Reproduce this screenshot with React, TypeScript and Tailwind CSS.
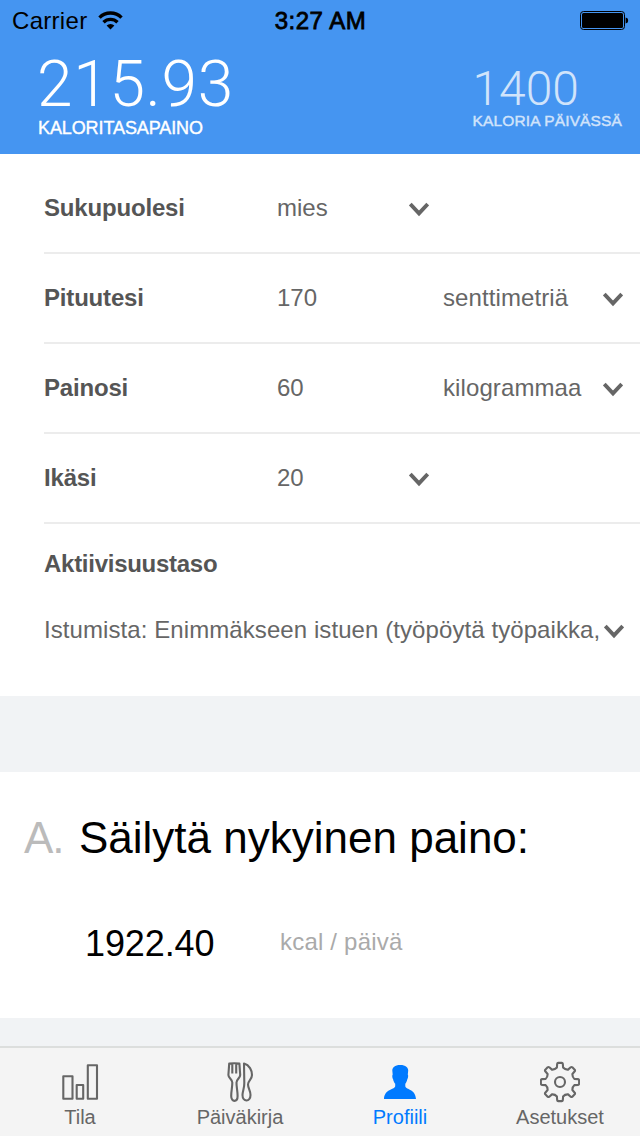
import React from "react";

const Chevron = () => (
  <svg width="20" height="16" viewBox="0 0 20 16" className="relative top-[2px] block" fill="none" stroke="#666" strokeWidth="3.8">
    <path d="M1.3 2 10 11.4 18.7 2" />
  </svg>
);

const rad = (deg: number) => (deg * Math.PI) / 180;
const point = (r: number, deg: number) =>
  `${(20 + r * Math.sin(rad(deg))).toFixed(2)} ${(20 - r * Math.cos(rad(deg))).toFixed(2)}`;
const gearPath =
  Array.from({ length: 8 }, (_, i) => {
    const a = i * 45;
    return [
      `${i === 0 ? "M" : "L"}${point(14.8, a - 12)}`,
      `L${point(18.2, a - 9)}`,
      `Q${point(19.2, a - 8)} ${point(19.2, a - 5)}`,
      `L${point(19.2, a + 5)}`,
      `Q${point(19.2, a + 8)} ${point(18.2, a + 9)}`,
      `L${point(14.8, a + 12)}`,
      `Q${point(13.2, a + 22.5)} ${point(14.8, a + 33)}`,
    ].join(" ");
  }).join(" ") + "Z";

type RowProps = { label: string; value: string; unit?: string };

const Row = ({ label, value, unit }: RowProps) => (
  <div className="flex h-[90px] items-center border-b-2 border-[#ececec] text-[24px]">
    <div className="w-[233px] font-bold tracking-[-0.18px] text-[#555]">{label}</div>
    {unit ? (
      <>
        <div className="w-[166px]">{value}</div>
        <div className="w-[160px] tracking-[0.1px]">{unit}</div>
        <Chevron />
      </>
    ) : (
      <>
        <div className="w-[132px]">{value}</div>
        <Chevron />
      </>
    )}
  </div>
);

const Tab = ({ label, active, children }: { label: string; active?: boolean; children: React.ReactNode }) => (
  <div className={active ? "flex w-40 flex-col items-center text-[#007aff]" : "flex w-40 flex-col items-center text-[#666]"}>
    <svg width="40" height="44" viewBox="0 -2 40 44" className="mt-3 block" fill="none" stroke="currentColor" strokeWidth="2.1">
      {children}
    </svg>
    <span className="mt-[1px] text-[20px] leading-6">{label}</span>
  </div>
);

export default function App() {
  return (
    <div className="flex h-[1136px] w-[640px] flex-col overflow-hidden bg-[#f1f3f5] font-['Liberation_Sans',Arial,sans-serif] text-[#666]">
      <header className="h-[154px] shrink-0 bg-[#4595f1]">
        <div className="grid h-[41px] grid-cols-3 items-center pl-3 pr-[11px] text-[24px] text-black">
          <div className="flex items-center gap-[11px]">
            <span className="pt-px tracking-[0.3px]">Carrier</span>
            <svg width="25" height="19" viewBox="0 0 25 19" fill="none" stroke="#000" strokeWidth="3.4">
              <path d="M1.5 6.6a15.5 15.5 0 0 1 22 0M5.5 11.2a10 10 0 0 1 14 0" />
              <path d="M8.6 14.5a5.5 5.5 0 0 1 7.8 0L12.5 18.5z" fill="#000" stroke="none" />
            </svg>
          </div>
          <div className="pt-px text-center tracking-[0.5px] [-webkit-text-stroke:0.8px_#000]">3:27 AM</div>
          <svg width="50" height="20" viewBox="0 0 50 20" className="ml-auto">
            <rect x="1.5" y="0.5" width="44" height="18" rx="3" fill="none" stroke="#000" strokeWidth="1" />
            <rect x="3" y="2" width="41" height="15" rx="1.5" />
            <path d="M46.6 6.500c2 .4 2.500 1.500 2.500 3s-.5 2.600-2.500 3z" />
          </svg>
        </div>
        <div className="flex justify-between pl-[38px] pr-[18px] text-white">
          <div className="pt-3">
            <div className="ml-[-1px] font-['Roboto'] text-[64px] font-light leading-[63px] tracking-[0.7px]">215.93</div>
            <div className="text-[18px] leading-6 tracking-[-0.1px] [-webkit-text-stroke:0.4px_#fff]">KALORITASAPAINO</div>
          </div>
          <div className="pt-[26px] opacity-75">
            <div className="font-['Roboto'] text-[48px] font-light leading-[43px] tracking-[-0.1px]">1400</div>
            <div className="mt-[-1px] text-[15.5px] leading-6 tracking-[0.13px] [-webkit-text-stroke:0.4px_#fff]">KALORIA PÄIVÄSSÄ</div>
          </div>
        </div>
      </header>

      <section className="h-[542px] shrink-0 bg-white pl-11 pt-[10px]">
        <Row label="Sukupuolesi" value="mies" />
        <Row label="Pituutesi" value="170" unit="senttimetriä" />
        <Row label="Painosi" value="60" unit="kilogrammaa" />
        <Row label="Ikäsi" value="20" />
        <div className="mt-6 text-[24px] font-bold leading-8 tracking-[-0.27px] text-[#555]">Aktiivisuustaso</div>
        <div className="mt-[34px] flex items-center text-[24px] leading-8">
          <span className="w-[560px] whitespace-nowrap tracking-[0.08px]">Istumista: Enimmäkseen istuen (työpöytä työpaikka,</span>
          <Chevron />
        </div>
      </section>

      <section className="mt-[76px] h-[246px] shrink-0 bg-white">
        <div className="flex pl-6 pt-[38px] text-[44px] leading-[56px] text-black">
          <span className="w-[55px] tracking-[-1px] text-[#bbb]">A.</span>
          <span>Säilytä nykyinen paino:</span>
        </div>
        <div className="mt-[54px] flex items-start pl-[85px]">
          <span className="w-[195px] text-[36px] leading-[48px] tracking-[-0.1px] text-black">1922.40</span>
          <span className="text-[24px] leading-[44px] tracking-[0.2px] text-[#aaa]">kcal / päivä</span>
        </div>
      </section>

      <nav className="mt-[28px] flex h-[90px] shrink-0 border-t-2 border-[#dcdedd] bg-[#f4f4f4]">
        <Tab label="Tila">
          <path strokeLinejoin="round" d="M3.3 14.3h9.2v22.4H3.3zM16.7 23h6.5v13.7h-6.5zM27.8 3.3H37v33.4h-9.2z" />
        </Tab>
        <Tab label="Päiväkirja">
          <path
            strokeLinejoin="round"
            d="M9.200 1.600Q14.300 .9 19.400 1.600L20.200 13C20.200 16 16.700 17 16.500 20.500C16.400 25 17.600 29 17.600 34C17.600 40.500 11.200 40.500 11.200 34C11.200 29 12.400 25 12.300 20.500C12.100 17 8.400 16 8.400 13ZM12.300 1.500V11.500M16.200 1.500V11.500"
          />
          <path
            strokeLinejoin="round"
            d="M24 1.500C29.500 3 32 8.500 32 13C32 17.500 28 18.500 28 22.500C28 26 30.500 28.500 30.500 33C30.500 40.500 22.500 40 22.500 33C22.500 29 24.500 26 24.300 21Z"
          />
        </Tab>
        <Tab label="Profiili" active>
          <path
            fill="currentColor"
            stroke="none"
            d="M20.200 3C25.800 3 28.200 5.500 28.200 8.500L27.800 12.500C28.600 13.500 28 16.200 27.300 17.200C26.900 19.300 26.200 20.500 25.300 21.800V24.300C26.300 28 35.500 27 36 37H4C4.500 27 14.200 28 15.200 24.300V21.800C14.200 20.500 13.500 19.300 13.100 17.200C12.300 16.200 11.900 13.500 12.700 12.500L12.300 8.500C12.300 5.500 14.700 3 20.200 3Z"
          />
        </Tab>
        <Tab label="Asetukset">
          <path strokeLinejoin="round" d={gearPath} />
          <circle cx="20" cy="20" r="5" />
        </Tab>
      </nav>
    </div>
  );
}
